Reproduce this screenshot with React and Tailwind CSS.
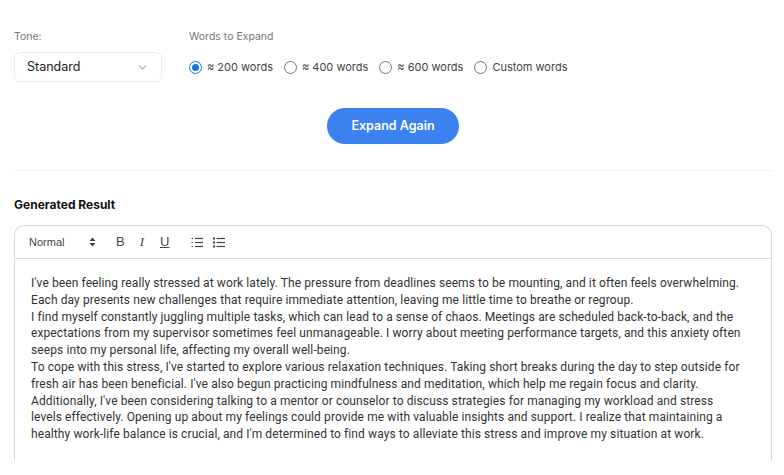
import { ChevronDown } from 'lucide-react'

const options = ['≈ 200 words', '≈ 400 words', '≈ 600 words', 'Custom words']

const paragraphs = [
  "I've been feeling really stressed at work lately. The pressure from deadlines seems to be mounting, and it often feels overwhelming. Each day presents new challenges that require immediate attention, leaving me little time to breathe or regroup.",
  "I find myself constantly juggling multiple tasks, which can lead to a sense of chaos. Meetings are scheduled back-to-back, and the expectations from my supervisor sometimes feel unmanageable. I worry about meeting performance targets, and this anxiety often seeps into my personal life, affecting my overall well-being.",
  "To cope with this stress, I've started to explore various relaxation techniques. Taking short breaks during the day to step outside for fresh air has been beneficial. I've also begun practicing mindfulness and meditation, which help me regain focus and clarity. Additionally, I've been considering talking to a mentor or counselor to discuss strategies for managing my workload and stress levels effectively. Opening up about my feelings could provide me with valuable insights and support. I realize that maintaining a healthy work-life balance is crucial, and I'm determined to find ways to alleviate this stress and improve my situation at work.",
]

function Radio({ checked, label }) {
  return (
    <label className="flex items-center gap-[5px] text-[11px] text-[#444]">
      {checked ? (
        <span className="w-[13px] h-[13px] rounded-full border-[1.5px] border-[#1a73e8] flex items-center justify-center">
          <span className="w-[7px] h-[7px] rounded-full bg-[#1a73e8]" />
        </span>
      ) : (
        <span className="w-[13px] h-[13px] rounded-full border border-[#767676]" />
      )}
      {label}
    </label>
  )
}

function UpDownIcon() {
  return (
    <svg width="7" height="10" viewBox="0 0 7 10" fill="#444">
      <polygon points="3.5,0.5 6.5,4 0.5,4" />
      <polygon points="0.5,6 6.5,6 3.5,9.5" />
    </svg>
  )
}

function OrderedIcon() {
  return (
    <svg width="12" height="11" viewBox="0 0 12 11" fill="none" stroke="#444" strokeWidth="1.2">
      <line x1="4" y1="1.5" x2="12" y2="1.5" />
      <line x1="4" y1="5.5" x2="12" y2="5.5" />
      <line x1="4" y1="9.5" x2="12" y2="9.5" />
      <line x1="0.5" y1="1.5" x2="2" y2="1.5" strokeWidth="1" />
      <line x1="0.5" y1="5.5" x2="2" y2="5.5" strokeWidth="1" />
      <line x1="0.5" y1="9.5" x2="2" y2="9.5" strokeWidth="1" />
    </svg>
  )
}

function BulletIcon() {
  return (
    <svg width="12" height="11" viewBox="0 0 12 11" fill="none" stroke="#444" strokeWidth="1.2">
      <line x1="3.5" y1="1.5" x2="12" y2="1.5" />
      <line x1="3.5" y1="5.5" x2="12" y2="5.5" />
      <line x1="3.5" y1="9.5" x2="12" y2="9.5" />
      <circle cx="1" cy="1.5" r="0.6" fill="#444" />
      <circle cx="1" cy="5.5" r="0.6" fill="#444" />
      <circle cx="1" cy="9.5" r="0.6" fill="#444" />
    </svg>
  )
}

export default function App() {
  return (
    <div className="w-[784px] h-[475px] bg-white pl-[14px] pr-[12px] pt-[30px] overflow-hidden font-['Inter',sans-serif]">
      <div className="flex gap-[27px]">
        <div>
          <div className="text-[10.5px] text-[#777] leading-[14px]">Tone:</div>
          <div className="mt-[8px] w-[148px] h-[30px] border border-[#ebebeb] rounded-[6px] flex items-center justify-between pl-[12px] pr-[12px]">
            <span className="text-[12.5px] text-[#222]">Standard</span>
            <ChevronDown size={13} strokeWidth={1.5} className="text-[#666]" />
          </div>
        </div>
        <div>
          <div className="text-[10.5px] text-[#777] leading-[14px]">Words to Expand</div>
          <div className="mt-[8px] h-[30px] flex items-center gap-[11px]">
            {options.map((o, i) => (
              <Radio key={o} checked={i === 0} label={o} />
            ))}
          </div>
        </div>
      </div>

      <div className="flex justify-center mt-[26px]">
        <button className="w-[132px] h-[36px] rounded-full bg-[#3b82f0] text-white text-[12.5px] font-semibold">
          Expand Again
        </button>
      </div>

      <div className="mt-[26px] border-t border-[#f0f0f0]" />

      <div className="mt-[27px] text-[12px] font-bold text-[#111] leading-[14px]">Generated Result</div>

      <div className="mt-[13px] h-[236px] border border-b-0 border-[#d9d9d9] rounded-t-[10px]">
        <div className="h-[33px] border-b border-[#d9d9d9] flex items-center pl-[14px] text-[#444]">
          <span className="w-[60px] text-[11px] font-['Liberation_Sans',sans-serif]">Normal</span>
          <UpDownIcon />
          <span className="ml-[20px] text-[13px] font-['Liberation_Sans',sans-serif]">B</span>
          <span className="ml-[15px] text-[13px] italic font-['Liberation_Serif',serif]">I</span>
          <span className="ml-[16px] text-[13px] underline font-['Liberation_Sans',sans-serif]">U</span>
          <span className="ml-[22px]"><OrderedIcon /></span>
          <span className="ml-[10px]"><BulletIcon /></span>
        </div>
        <div className="pl-[16px] pr-[26px] pt-[16px] font-['Roboto',sans-serif] text-[12px] tracking-[0.1px] leading-[16.8px] text-[#333]">
          {paragraphs.map(p => (
            <p key={p.slice(0, 10)}>{p}</p>
          ))}
        </div>
      </div>
    </div>
  )
}
